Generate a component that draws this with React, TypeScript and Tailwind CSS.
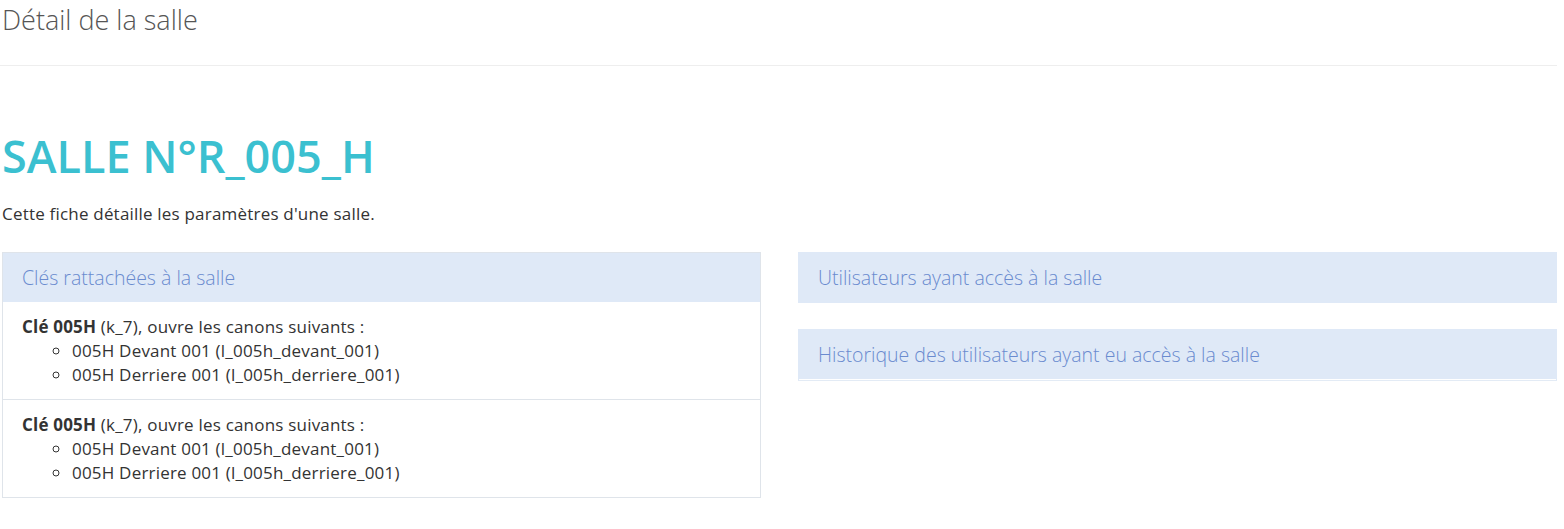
import React from 'react';

type Canon = { label: string; code: string };
type Cle = { name: string; code: string; canons: Canon[] };

const cles: Cle[] = [
  {
    name: 'Clé 005H',
    code: 'k_7',
    canons: [
      { label: '005H Devant 001', code: 'l_005h_devant_001' },
      { label: '005H Derriere 001', code: 'l_005h_derriere_001' },
    ],
  },
  {
    name: 'Clé 005H',
    code: 'k_7',
    canons: [
      { label: '005H Devant 001', code: 'l_005h_devant_001' },
      { label: '005H Derriere 001', code: 'l_005h_derriere_001' },
    ],
  },
];

function PanelHeader({ title }: { title: string }) {
  return (
    <div className="bg-[#dfe9f7] px-[19px] h-[49px] leading-[49px] text-[19.5px] tracking-normal font-light text-[#6a8bcf]">
      {title}
    </div>
  );
}

export default function App() {
  return (
    <div className="font-['Open_Sans',sans-serif] text-[17px] tracking-[0.2px] text-[#333] bg-white min-h-[529px] pl-[2px] pr-[7px]">
      <h1 className="text-[27px] tracking-normal font-light text-[#555] leading-[40px] h-[66px] border-b border-[#eee] -ml-[2px]">
        <span className="pl-[2px]">Détail de la salle</span>
      </h1>

      <h2 className="mt-[65px] text-[45px] tracking-normal font-semibold leading-[50px] text-[#3bc0d0]">SALLE N°R_005_H</h2>
      <p className="mt-[21px] leading-[24px]">Cette fiche détaille les paramètres d'une salle.</p>

      <div className="mt-[26px] grid grid-cols-2 gap-[37px] items-start">
        {/* clés */}
        <div className="border border-[#dfe4ea]">
          <PanelHeader title="Clés rattachées à la salle" />
          {cles.map((cle, i) => (
            <div key={i} className={`px-[19px] pt-[13px] pb-[12px] leading-[24px] ${i > 0 ? 'border-t border-[#dfe4ea]' : ''}`}>
              <div>
                <b className="font-bold">{cle.name}</b> ({cle.code}), ouvre les canons suivants :
              </div>
              <ul className="list-[circle] pl-[50px]">
                {cle.canons.map((c, j) => (
                  <li key={j}>
                    {c.label} ({c.code})
                  </li>
                ))}
              </ul>
            </div>
          ))}
        </div>

        {/* utilisateurs */}
        <div className="flex flex-col gap-[26px]">
          <div className="border border-[#dfe9f7]">
            <PanelHeader title="Utilisateurs ayant accès à la salle" />
          </div>
          <div className="border border-[#dfe9f7] border-b-[#e3ebf5]">
            <PanelHeader title="Historique des utilisateurs ayant eu accès à la salle" />
            <div className="h-px bg-white" />
          </div>
        </div>
      </div>
    </div>
  );
}
